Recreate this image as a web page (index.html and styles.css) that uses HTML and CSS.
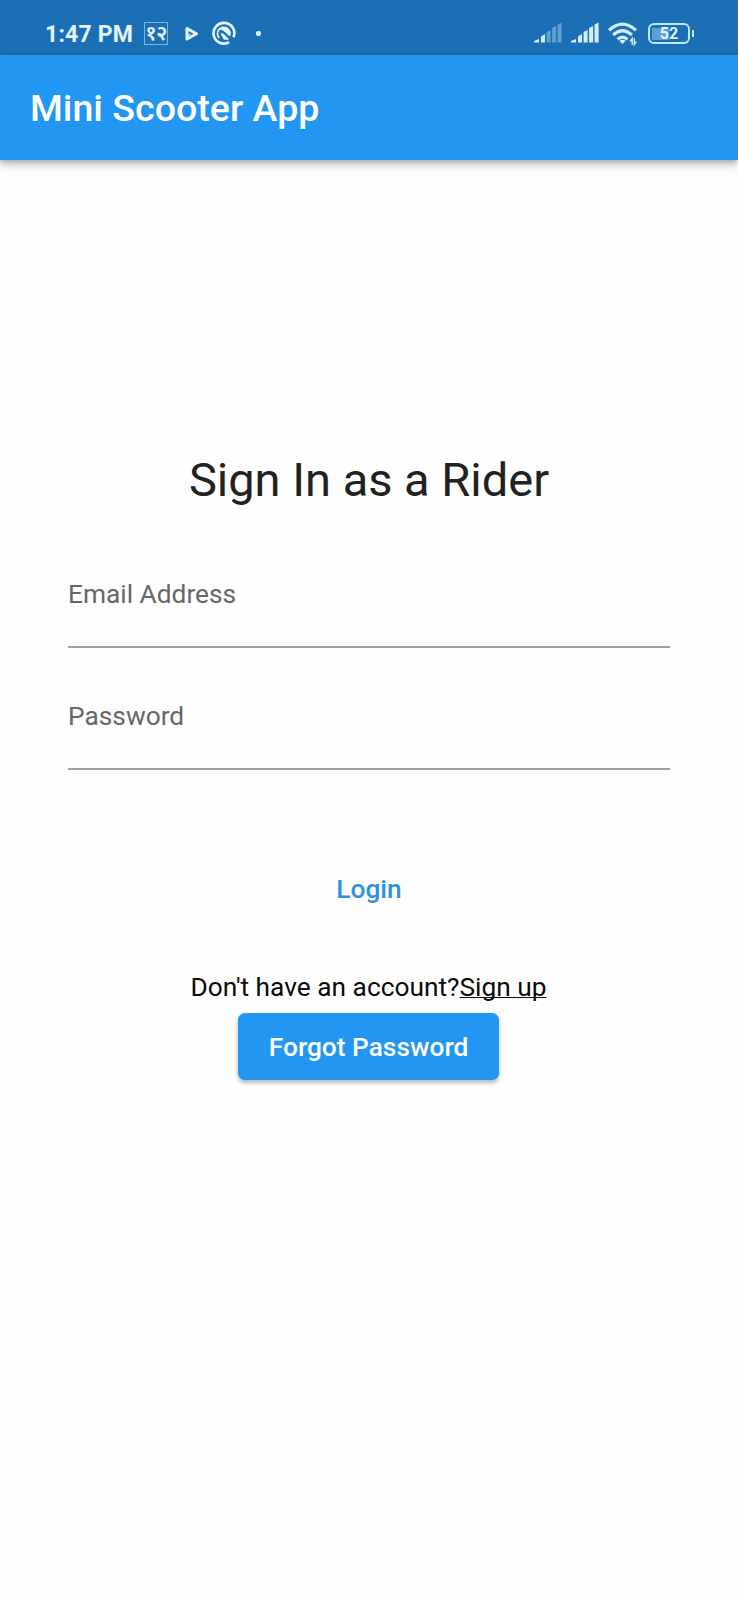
FILE: index.html
```
<!DOCTYPE html>
<html lang="en">
<head>
<meta charset="utf-8">
<title>Mini Scooter App</title>
<link rel="stylesheet" href="styles.css">
</head>
<body>
<div class="status-bar">
  <span class="clock">1:47 PM</span>
  <span class="calendar">१२</span>
  <svg class="play" width="14" height="16" viewBox="0 0 14 16"><path d="M2 2.5 11.5 7.7 2 13Z" fill="none" stroke="#e3f5ff" stroke-width="3" stroke-linejoin="round"/><path d="M5.5 8 1.5 10.5" fill="none" stroke="#e3f5ff" stroke-width="1.2"/></svg>
  <svg class="compass" width="24" height="24" viewBox="0 0 24 24"><path d="M17.1 21.2A10.4 10.4 0 1 1 21.5 16.2" fill="none" stroke="#e3f5ff" stroke-width="2.7"/><path d="M7.2 16.8A6.2 6.2 0 1 1 17.6 14.5" fill="none" stroke="#e3f5ff" stroke-width="1.8"/><path d="M8 8.8A5.6 5.6 0 0 1 17.6 15.5L13.5 11.5Q11 9 8 8.8Z" fill="#e3f5ff"/><path d="M8.5 12.5Q10.5 11.5 12 13.2L17.2 18.2Q14.2 19.4 11.5 18.2Z" fill="#e3f5ff"/></svg>
  <span class="dot"></span>
  <div class="system">
    <svg class="signal" width="28" height="21" viewBox="0 0 28 21" fill="#d3eefd"><path d="M0 20.5V19L5 17V20.5Z"/><path d="M7 20.5V14.5L11 12V20.5Z"/><g opacity=".38"><path d="M12.6 20.5V10L16.6 8V20.5Z"/><path d="M18.1 20.5V6L22.1 4V20.5Z"/><path d="M23.6 20.5V2.5L27.6 .5V20.5Z"/></g></svg>
    <svg class="signal" width="28" height="21" viewBox="0 0 28 21" fill="#d3eefd"><path d="M0 20.5V19L5 17V20.5Z"/><path d="M7 20.5V14.5L11 12V20.5Z"/><path d="M12.6 20.5V10L16.6 8V20.5Z"/><path d="M18.1 20.5V6L22.1 4V20.5Z"/><path d="M23.6 20.5V2.5L27.6 .5V20.5Z"/></svg>
    <svg class="wifi" width="29" height="24" viewBox="0 0 29 24" fill="none" stroke="#d3eefd" stroke-width="3.2"><path d="M1 8.2Q14.5-4 28 8.2M5.2 13Q14.5 4.5 23.8 13M9.6 17.4Q14.5 12.9 19.4 17.4"/><path d="M14.5 22 11.3 18.8Q14.5 16.6 17.7 18.8Z" fill="#d3eefd" stroke="none"/><path d="M24.2 23V16.5L22.2 19.5M26.3 16.2V22.6L28.3 19.7" stroke-width="1.4"/></svg>
    <div class="battery"><span class="battery-case"><span class="battery-level"></span><b>52</b></span><span class="battery-tip"></span></div>
  </div>
</div>
<header class="app-bar">Mini Scooter App</header>
<main class="sign-in">
  <h1 class="heading">Sign In as a Rider</h1>
  <label class="field">Email Address</label>
  <label class="field">Password</label>
  <button class="login">Login</button>
  <p class="account">Don't have an account?<a class="sign-up">Sign up</a></p>
  <button class="forgot">Forgot Password</button>
</main>
</body>
</html>
```
FILE: styles.css
```
* { box-sizing: border-box; }
body {
  margin: 0;
  min-height: 1599px;
  background: #fefefe;
  font-family: Roboto, sans-serif;
  font-size: 26.3px;
}
.status-bar {
  display: flex;
  align-items: flex-start;
  height: 55px;
  padding: 0 44px 0 45px;
  background: #1b6fb5;
  color: #e3f5ff;
}
.clock {
  width: 99px;
  margin-top: 20px;
  font-size: 23px;
  font-weight: 700;
  line-height: 29px;
  letter-spacing: .2px;
  white-space: nowrap;
}
.calendar {
  display: flex;
  justify-content: center;
  width: 24px;
  height: 23px;
  margin-top: 22px;
  border: 1px solid #7fb7e3;
  font: 600 21px/18px "Noto Sans", sans-serif;
  letter-spacing: -.8px;
}
.play { margin: 26px 0 0 17px; }
.compass { margin: 21px 0 0 13px; }
.dot {
  width: 5px;
  height: 5px;
  margin: 31px 0 0 20px;
  border-radius: 2px;
  background: #e3f5ff;
}
.system { display: flex; margin-left: auto; }
.signal { margin: 22px 10px 0 -1px; }
.wifi { margin: 22px 11px 0 -1px; }
.battery { display: flex; align-items: center; height: 21px; margin-top: 23px; }
.battery-case {
  display: grid;
  align-items: center;
  width: 42px;
  height: 21px;
  padding: 1px 2px;
  border: 2.5px solid #c7e8fc;
  border-radius: 6px;
}
.battery-case > * { grid-area: 1 / 1; }
.battery-level {
  width: 17px;
  height: 12px;
  border-radius: 1px;
  background: #5a9fd7;
}
.battery b { font-size: 16px; line-height: 13px; text-align: center; }
.battery-tip { width: 2px; height: 7px; margin-left: 2px; background: #c7e8fc; }
.app-bar {
  height: 105px;
  padding: 1px 30px 0;
  background: #2196f3;
  box-shadow: 0 5px 9px rgba(0, 0, 0, .22), 0 2px 5px rgba(0, 0, 0, .16);
  color: #fff;
  font-size: 37.6px;
  font-weight: 500;
  line-height: 105px;
}
.sign-in {
  display: flex;
  flex-direction: column;
  align-items: center;
  padding: 290px 68px 0;
}
.heading {
  margin: 0;
  color: #212121;
  font-size: 47px;
  font-weight: 400;
  line-height: 60px;
}
.field {
  width: 100%;
  height: 90px;
  margin-top: 48px;
  border-bottom: 2px solid #a2a2a2;
  color: #666;
  line-height: 72px;
}
.field + .field { margin-top: 32px; }
.login, .forgot { border: 0; font: 500 26.3px Roboto, sans-serif; }
.login {
  height: 68px;
  margin-top: 85px;
  background: none;
  color: #2f92e0;
}
.account { margin: 44px 1px 0 0; color: #0b0b0b; line-height: 40px; }
.sign-up { text-decoration: underline; text-decoration-thickness: 1px; text-decoration-skip-ink: none; text-underline-offset: 1px; }
.forgot {
  width: 261px;
  height: 67px;
  margin: 6px 1px 0 0;
  border-radius: 7px;
  background: #2196f3;
  box-shadow: 0 3px 4px rgba(0, 0, 0, .28);
  color: #fff;
}
```
